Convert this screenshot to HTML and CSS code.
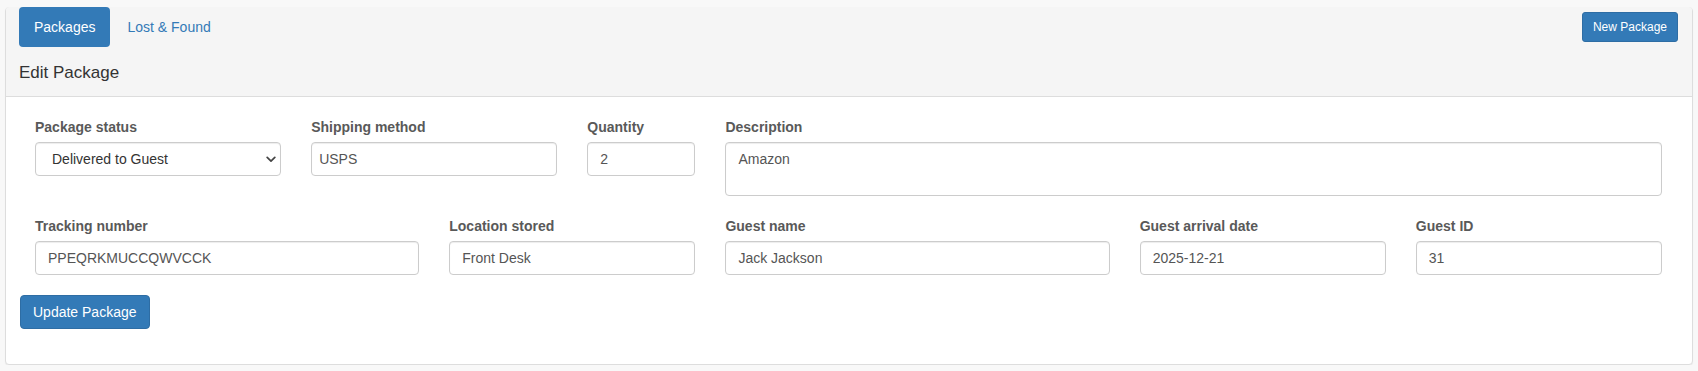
FILE: index.html
```html
<!DOCTYPE html>
<html lang="en">
<head>
  <meta charset="UTF-8">
  <title>Edit Package</title>
  <meta name="viewport" content="width=device-width, initial-scale=1.0">
  <link rel="stylesheet" href="styles.css">
</head>
<body>
  <div class="panel">
    <div class="panel-heading">
      <div class="nav-bar">
        <ul class="nav-pills">
          <li class="active"><a href="#">Packages</a></li>
          <li><a href="#">Lost &amp; Found</a></li>
        </ul>
        <button class="btn btn-primary btn-sm">New Package</button>
      </div>
      <h3 class="panel-title">Edit Package</h3>
    </div>

    <div class="panel-body">
      <form>
        <div class="fields">
          <div class="field span-2">
            <label for="status">Package status</label>
            <div class="select-wrap">
              <select id="status" class="form-control">
                <option>Delivered to Guest</option>
                <option>Received</option>
                <option>Notified</option>
              </select>
              <svg class="chevron" width="10" height="7" viewBox="0 0 10 7">
                <path d="M1.2 1.4 L5 5.2 L8.8 1.4" fill="none" stroke="#444" stroke-width="1.7" stroke-linecap="round" stroke-linejoin="round"/>
              </svg>
            </div>
          </div>
          <div class="field span-2">
            <label for="shipping">Shipping method</label>
            <input id="shipping" class="form-control tight" type="text" value="USPS">
          </div>
          <div class="field span-1">
            <label for="qty">Quantity</label>
            <input id="qty" class="form-control" type="text" value="2">
          </div>
          <div class="field span-7">
            <label for="desc">Description</label>
            <textarea id="desc" class="form-control" rows="2">Amazon</textarea>
          </div>

          <div class="field span-3">
            <label for="tracking">Tracking number</label>
            <input id="tracking" class="form-control" type="text" value="PPEQRKMUCCQWVCCK">
          </div>
          <div class="field span-2">
            <label for="location">Location stored</label>
            <input id="location" class="form-control" type="text" value="Front Desk">
          </div>
          <div class="field span-3">
            <label for="guest">Guest name</label>
            <input id="guest" class="form-control" type="text" value="Jack Jackson">
          </div>
          <div class="field span-2">
            <label for="arrival">Guest arrival date</label>
            <input id="arrival" class="form-control" type="text" value="2025-12-21">
          </div>
          <div class="field span-2">
            <label for="guestId">Guest ID</label>
            <input id="guestId" class="form-control" type="text" value="31">
          </div>
        </div>

        <button type="submit" class="btn btn-primary">Update Package</button>
      </form>
    </div>
  </div>
</body>
</html>
```

FILE: styles.css
```css
html, body {
  margin: 0;
  padding: 0;
}

body {
  background: #f8f8f8;
  font-family: 'Liberation Sans', Arial, Helvetica, sans-serif;
  font-size: 14px;
  line-height: 20px;
  color: #333;
  padding: 7px 5px 0;
}

.panel {
  background: #fff;
  border: 1px solid #ddd;
  border-radius: 4px;
  box-shadow: 0 1px 1px rgba(0, 0, 0, 0.05);
}

.panel-heading {
  background: #f5f5f5;
  border-bottom: 1px solid #ddd;
  border-radius: 3px 3px 0 0;
  padding: 0 14px 13px 13px;
}

.nav-bar {
  display: flex;
  align-items: center;
  justify-content: space-between;
  margin-top: -1px;
}

.nav-pills {
  display: flex;
  list-style: none;
  margin: 0;
  padding: 0;
}

.nav-pills li + li {
  margin-left: 2px;
}

.nav-pills a {
  display: block;
  padding: 10px 15px;
  border-radius: 4px;
  color: #337ab7;
  text-decoration: none;
}

.nav-pills .active a {
  background: #337ab7;
  color: #fff;
}

.panel-title {
  margin: 16px 0 0;
  font-size: 17px;
  font-weight: normal;
  line-height: 20px;
  color: #333;
}

.btn {
  display: inline-block;
  font-family: inherit;
  font-size: 14px;
  line-height: 20px;
  padding: 6px 12px;
  border: 1px solid transparent;
  border-radius: 4px;
  cursor: pointer;
}

.btn-primary {
  background: #337ab7;
  border-color: #2e6da4;
  color: #fff;
}

.btn-sm {
  font-size: 12px;
  line-height: 18px;
  padding: 5px 10px;
  border-radius: 3px;
}

.panel-body {
  padding: 20px 14px 35px;
}

.fields {
  display: grid;
  grid-template-columns: repeat(12, 1fr);
  column-gap: 30px;
  row-gap: 20px;
  align-items: start;
  padding: 0 16px 0 15px;
  margin-bottom: 20px;
}

.span-1 { grid-column: span 1; }
.span-2 { grid-column: span 2; }
.span-3 { grid-column: span 3; }
.span-7 { grid-column: span 7; }

.field label {
  display: block;
  margin-bottom: 5px;
  font-weight: bold;
  color: #595959;
}

.form-control {
  display: block;
  box-sizing: border-box;
  width: 100%;
  height: 34px;
  margin: 0;
  padding: 6px 12px;
  font-family: inherit;
  font-size: 14px;
  line-height: 20px;
  color: #555;
  background: #fff;
  border: 1px solid #ccc;
  border-radius: 4px;
  box-shadow: inset 0 1px 1px rgba(0, 0, 0, 0.075);
}

.form-control.tight {
  padding-left: 7px;
}

textarea.form-control {
  height: 54px;
  resize: none;
}

.select-wrap {
  position: relative;
}

select.form-control {
  appearance: none;
  -webkit-appearance: none;
  padding-left: 16px;
  color: #333;
}

.chevron {
  position: absolute;
  right: 5px;
  top: 14px;
  pointer-events: none;
}
```
